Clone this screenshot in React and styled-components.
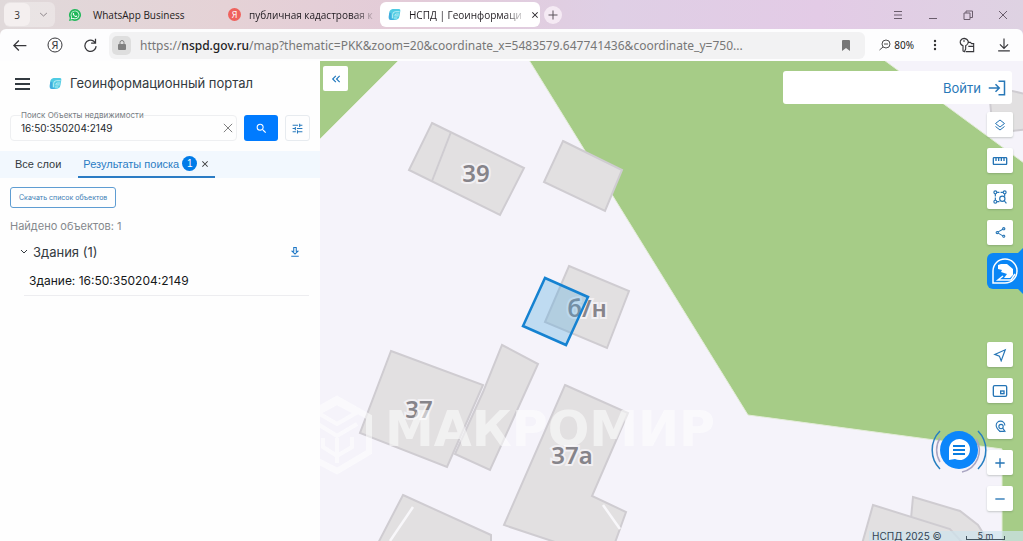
import styled, { createGlobalStyle } from "styled-components";
import {
  MdAdd,
  MdClose,
  MdKeyboardDoubleArrowLeft,
  MdOutlineShare,
  MdRemove,
  MdSearch,
  MdStraighten,
  MdTune,
} from "react-icons/md";
import { FaWhatsapp } from "react-icons/fa";

const GlobalStyle = createGlobalStyle`
  * {
    box-sizing: border-box;
  }

  body {
    margin: 0;
    font-family: Inter, "Liberation Sans", sans-serif;
    color: #333a40;
  }

  button {
    font: inherit;
    color: inherit;
    border: 0;
    padding: 0;
    background: none;
    cursor: pointer;
  }

  svg {
    display: block;
    flex: none;
  }
`;

const Window = styled.div`
  min-height: 100vh;
  display: flex;
  flex-direction: column;
  overflow: hidden;
  background: linear-gradient(90deg, #e0d9da 0, #e5d2d6 22%, #e3cbd8 40%, #dfcfe5 60%, #e3cbe6 80%, #ded2e2 100%);
`;

const TabBar = styled.header`
  height: 29px;
  display: flex;
  align-items: center;
  padding: 0 4px;
  font-family: "Open Sans", "Noto Sans", sans-serif;
  font-size: 10px;
  color: #1f1b20;
`;

const TabGroup = styled.button`
  height: 25px;
  width: 51px;
  display: flex;
  align-items: center;
  gap: 9px;
  border-radius: 6px;
  background: rgba(255, 255, 255, 0.3);
  color: #6f676c;
`;

const TabCount = styled.span`
  width: 26px;
  height: 23px;
  display: grid;
  place-items: center;
  border-radius: 6px;
  background: #f4efef;
  color: #333;
`;

const Tab = styled.div`
  width: ${(p) => p.$width}px;
  height: 25px;
  display: flex;
  align-items: center;
  gap: 8px;
  padding: 0 8px;
  margin-left: ${(p) => p.$gap || 0}px;
  border-radius: 6px;
  background: ${(p) => (p.$active ? "#fff" : "transparent")};

  button {
    margin-left: auto;
  }
`;

const TabTitle = styled.span`
  white-space: nowrap;
  padding-left: ${(p) => p.$inset || 0}px;
  mask-image: ${(p) => (p.$fade ? "linear-gradient(90deg, #000 85%, rgba(0, 0, 0, 0.2))" : "none")};
`;

const NewTab = styled.button`
  width: 18px;
  height: 18px;
  margin-left: 4px;
  display: grid;
  place-items: center;
  border-radius: 50%;
  background: #f5eaf4;
  color: #5b535b;
`;

const WindowButtons = styled.div`
  margin-left: auto;
  display: flex;
  align-items: center;
  gap: 23px;
  padding-right: 10px;
  color: #6a5d6c;

  button {
    width: 12px;
    height: 12px;
  }
`;

const AddressBar = styled.nav`
  height: 32px;
  display: flex;
  align-items: center;
  padding: 0 12px;
  border-radius: 6px 6px 0 0;
  background: #fdfdfe;
  color: #37373b;
  font-family: "Noto Sans", "Open Sans", sans-serif;
`;

const NavButtons = styled.div`
  width: 97px;
  display: flex;
  align-items: center;
  gap: 20px;
`;

const Address = styled.div`
  flex: 1;
  min-width: 0;
  height: 27px;
  display: flex;
  align-items: center;
  gap: 9px;
  padding: 0 15px 0 3px;
  border-radius: 6px;
  background: #f2f2f3;
`;

const Lock = styled.span`
  width: 19px;
  height: 19px;
  display: grid;
  place-items: center;
  border-radius: 5px;
  background: #dedede;
  color: #808080;
`;

const Url = styled.a`
  flex: 1;
  overflow: hidden;
  white-space: nowrap;
  text-decoration: none;
  color: #777;
  font-size: 12px;

  b {
    font-weight: 500;
    color: #1d1d1f;
  }
`;

const Zoom = styled.button`
  height: 24px;
  margin-left: 14px;
  display: flex;
  align-items: center;
  gap: 3px;
  font-size: 10px;
  color: #222;
`;

const BarTools = styled.div`
  display: flex;
  align-items: center;
  gap: 22px;
  margin-left: 19px;
`;

const Workspace = styled.main`
  flex: 1;
  display: flex;
`;

const Sidebar = styled.aside`
  width: 320px;
  flex: none;
  background: #fefefe;
`;

const Brand = styled.div`
  height: 44px;
  display: flex;
  align-items: center;
  gap: 19px;
  padding: 0 15px;
`;

const BrandName = styled.h1`
  margin: 0;
  display: flex;
  align-items: center;
  gap: 8px;
  font-size: 13px;
  font-weight: 400;
`;

const SearchRow = styled.form`
  height: 46px;
  display: flex;
  align-items: flex-end;
  gap: 7px;
  padding: 0 10px 10px;
`;

const Field = styled.fieldset`
  flex: 1;
  min-width: 0;
  height: 30px;
  margin: 0;
  padding: 0 3px 4px 10px;
  display: flex;
  align-items: center;
  border: 1px solid #eeeff1;
  border-radius: 4px;
`;

const FieldLabel = styled.label`
  display: block;
  font-size: 8px;
  line-height: 8px;
  color: #777d83;
`;

const Legend = styled.legend`
  padding: 0;
`;

const Input = styled.input`
  flex: 1;
  min-width: 0;
  border: 0;
  padding: 0;
  outline: 0;
  background: none;
  font: 400 10px Inter, sans-serif;
  color: #25292d;
`;

const SearchButton = styled.button`
  width: 34px;
  height: 26px;
  display: grid;
  place-items: center;
  border-radius: 3px;
  background: #007bff;
  color: #fff;
`;

const FilterButton = styled.button`
  width: 25px;
  height: 26px;
  display: grid;
  place-items: center;
  border: 1px solid #e7ebef;
  border-radius: 3px;
  color: #2779bd;
`;

const LayerTabs = styled.div`
  height: 27px;
  display: flex;
  align-items: stretch;
  gap: 12px;
  padding-left: 10px;
  background: #f2f8fe;
  font-family: "Liberation Sans", sans-serif;
  font-size: 11px;
`;

const LayerTab = styled.button`
  display: flex;
  align-items: center;
  gap: 3px;
  padding: 0 5px;
  border-bottom: 2px solid ${(p) => (p.$active ? "#2b7cc4" : "transparent")};
  color: ${(p) => (p.$active ? "#2b7cc4" : "#33383d")};

  svg {
    color: #333;
  }
`;

const Count = styled.span`
  width: 15px;
  height: 15px;
  display: grid;
  place-items: center;
  border-radius: 50%;
  background: #007be8;
  color: #fff;
  font-size: 10px;
`;

const Results = styled.section`
  padding: 9px 11px 0 10px;
`;

const DownloadList = styled.button`
  display: block;
  height: 21px;
  padding: 0 8px;
  border: 1px solid #5f9dd2;
  border-radius: 3px;
  color: #3d7db5;
  font-size: 7px;
`;

const Found = styled.p`
  margin: 10px 0 0;
  font-size: 11px;
  line-height: 16px;
  color: #85898d;
`;

const Group = styled.div`
  margin-top: 8px;
  display: flex;
  align-items: center;
  gap: 5px;
  padding: 0 9px 0 10px;
  font-size: 13px;
  line-height: 20px;

  button:last-child {
    margin-left: auto;
    color: #1c76c5;
  }
`;

const Item = styled.a`
  display: block;
  margin-left: 14px;
  padding: 10px 5px 5px;
  border-bottom: 1px solid #ededf0;
  color: #15181a;
  font-size: 12px;
  line-height: 18px;
  text-decoration: none;
`;

const MapArea = styled.section`
  position: relative;
  flex: 1;
  min-width: 0;
  display: flex;
  justify-content: space-between;
  background: #f5f3fa;
`;

const MapCanvas = styled.svg`
  position: absolute;
  inset: 0;
  width: 100%;
  height: 100%;
`;

const Collapse = styled.button`
  position: relative;
  width: 25px;
  height: 25px;
  margin: 5px 3px;
  display: grid;
  place-items: center;
  border-radius: 2px;
  background: #fff;
  color: #1f78be;
`;

const Overlay = styled.div`
  position: relative;
  width: 240px;
  display: flex;
  flex-direction: column;
  align-items: flex-end;
  padding-top: 10px;
`;

const Login = styled.div`
  width: 229px;
  height: 33px;
  margin-right: 11px;
  display: flex;
  align-items: center;
  justify-content: flex-end;
  padding-right: 6px;
  border-radius: 3px;
  background: #fff;
`;

const LoginLink = styled.a`
  display: flex;
  align-items: center;
  gap: 7px;
  color: #2878b8;
  font-size: 13px;
  text-decoration: none;
`;

const Tools = styled.div`
  display: flex;
  flex-direction: column;
  gap: 11px;
  margin: ${(p) => (p.$bottom ? "auto 10px 30px 0" : "8px 10px 8px 0")};
`;

const Tool = styled.button`
  width: 26px;
  height: 25px;
  display: grid;
  place-items: center;
  border-radius: 2px;
  background: #fff;
  color: #2574b5;
  box-shadow: 0 1px 2px rgba(60, 80, 60, 0.25);
`;

const Assistant = styled.button`
  position: relative;
  width: 36px;
  height: 36px;
  display: grid;
  place-items: center;
  border-radius: 6px 0 0 6px;
  background: #0a86f5;

  &::before,
  &::after {
    content: "";
    position: absolute;
    right: 0;
    border: 5px solid transparent;
    border-right-color: #0a86f5;
    border-left: 0;
  }

  &::before {
    top: -5px;
  }

  &::after {
    bottom: -5px;
  }
`;

const Chat = styled.button`
  position: absolute;
  right: 36px;
  bottom: 63px;
`;

const Attribution = styled.footer`
  position: absolute;
  right: 0;
  bottom: 0;
  width: 154px;
  height: 10px;
  display: flex;
  align-items: center;
  justify-content: space-between;
  padding: 0 18px 0 3px;
  background: rgba(207, 227, 236, 0.7);
  color: #334352;
  font-size: 10px;
  line-height: 10px;
  white-space: nowrap;
`;

const Scale = styled.span`
  position: relative;
  width: 39px;
  text-align: center;
  font-size: 9px;
  line-height: 10px;

  &::after {
    content: "";
    position: absolute;
    inset: 5px 0 1px;
    border: 1px solid #44545f;
    border-top: 0;
  }
`;

function Icon({ size = 16, box = 24, width = 2, children, ...rest }) {
  return (
    <svg
      width={size}
      height={size}
      viewBox={`0 0 ${box} ${box}`}
      fill="none"
      stroke="currentColor"
      strokeWidth={width}
      aria-hidden="true"
      {...rest}
    >
      {children}
    </svg>
  );
}

function PortalLogo({ size }) {
  return (
    <svg width={size} height={size} viewBox="0 0 14 14" aria-hidden="true">
      <path d="M5 1h7q1.500 0 1.300 2l-.8 5q-.6 5-6 5H3Q.5 13 .8 9.500L1.300 5Q1.700 1.500 5 1z" fill="#4fcbe3" />
      <path d="M5 11V7q0-3 3-3h4.500M7.500 9V8q0-1.500 1.500-1.500h3M8 8.500h3.500M6.500 10.800h3.500" fill="none" stroke="#dff8fb" strokeWidth="0.8" />
      <path d="M.8 9.500Q.5 13 3.500 13H7l-3.500-2V5.500L1.300 5z" fill="#3494dc" opacity="0.55" />
    </svg>
  );
}

const buildings = [
  "112,62 204,107 180,154 89,109",
  "243,80 302,109 285,150 224,121",
  "249,205 309,230 287,287 225,261",
  "71,290 163,324 127,406 40,372",
  "182,284 218,303 170,409 135,393 163,331",
  "245,324 308,352 272,435 306,451 292,490 262,490 184,464",
  "83,434 171,474 171,490 54,490",
  "593,436 640,450 658,464 674,490 588,490",
  "553,444 630,468 650,490 540,490",
  "670,40 683,28 710,34 710,68 692,70 672,60",
];

const labels = [
  { text: "39", x: 156, y: 121 },
  { text: "б/н", x: 267, y: 256 },
  { text: "37", x: 99, y: 357 },
  { text: "37а", x: 252, y: 403 },
];

function CityMap() {
  return (
    <MapCanvas viewBox="0 0 703 480" preserveAspectRatio="xMinYMin slice">
      <rect width="703" height="480" fill="#f5f3fa" />
      <g fill="#a6cc87" stroke="#e3ecd8">
        <path d="M-1-1H79L-1 79z" />
        <path d="M209-1H564L704 102V481H682V388L428 354z" />
      </g>
      <g fill="#e2e0e1" stroke="#cfccd1" strokeWidth="2">
        {buildings.map((points) => (
          <polygon key={points} points={points} />
        ))}
        <path d="M131 71L112 120" />
      </g>
      <path d="M93 446L70 480M283 444L300 468" stroke="#f8f7fa" strokeWidth="2.500" />
      <g
        fill="#86848a"
        stroke="#f2f0f3"
        strokeWidth="4"
        paintOrder="stroke"
        fontFamily="Noto Sans, sans-serif"
        fontSize="24"
        fontWeight="600"
        textAnchor="middle"
      >
        {labels.map((label) => (
          <text key={label.text} x={label.x} y={label.y}>{label.text}</text>
        ))}
      </g>
      <polygon points="225,217 268,236 246,284 203,265" fill="#4fa8df" fillOpacity="0.32" stroke="#1582d1" strokeWidth="2.500" />
      <g opacity="0.55">
        <g fill="none" stroke="#fff" strokeWidth="6">
          <path d="M-8 352L17 338L49 356V391L17 410L-8 397" />
          <path d="M-2 352L17 342L36 352L17 363zM-2 363L17 375L37 363M17 377V402M3 377V386L17 395L32 386V376" strokeWidth="4" />
        </g>
        <text x="65" y="385" fill="#fff" fontFamily="DejaVu Sans, sans-serif" fontSize="49" fontWeight="700">МАКРОМИР</text>
      </g>
    </MapCanvas>
  );
}

function BrowserChrome() {
  return (
    <>
      <TabBar>
        <TabGroup aria-label="Группа вкладок">
          <TabCount>3</TabCount>
          <Icon size={9} width={2}><path d="M3 8l9 8 9-8" /></Icon>
        </TabGroup>
        <Tab $width={160} $gap={5}>
          <svg width="14" height="14" viewBox="0 0 14 14">
            <path d="M7 1a6 6 0 1 1-3 11.200L1 13l.8-3A6 6 0 0 1 7 1z" fill="#20b75a" />
            <FaWhatsapp x="2" y="2" size={10} color="#fff" />
          </svg>
          <TabTitle $inset={3}>WhatsApp Business</TabTitle>
        </Tab>
        <Tab $width={160}>
          <svg width="13" height="13" viewBox="0 0 13 13">
            <circle cx="6.500" cy="6.500" r="6.500" fill="#ef625d" />
            <text x="6.500" y="10" textAnchor="middle" fill="#fff" fontSize="9">Я</text>
          </svg>
          <TabTitle $fade>публичная кадастровая к</TabTitle>
        </Tab>
        <Tab $width={160} $active>
          <PortalLogo size={13} />
          <TabTitle $fade>НСПД | Геоинформаци</TabTitle>
          <button aria-label="Закрыть вкладку"><MdClose size={10} /></button>
        </Tab>
        <NewTab aria-label="Новая вкладка">
          <Icon size={12} width={2}><path d="M12 3v18M3 12h18" /></Icon>
        </NewTab>
        <WindowButtons>
          <button aria-label="Меню"><Icon size={12} width={2}><path d="M4 5h16M4 12h16M4 19h16" /></Icon></button>
          <button aria-label="Свернуть"><Icon size={12} width={2}><path d="M4 19h16" /></Icon></button>
          <button aria-label="Развернуть"><Icon size={12} width={2}><path d="M4 8h12v13H4zM8 8V4h13v13h-5" /></Icon></button>
          <button aria-label="Закрыть"><Icon size={12} width={2}><path d="M4 4l16 16M20 4L4 20" /></Icon></button>
        </WindowButtons>
      </TabBar>
      <AddressBar>
        <NavButtons>
          <button aria-label="Назад"><Icon size={15}><path d="M23 12H3M11 4l-8 8 8 8" /></Icon></button>
          <button aria-label="Яндекс">
            <svg width="16" height="16" viewBox="0 0 16 16">
              <circle cx="8" cy="8" r="7" fill="none" stroke="currentColor" />
              <text x="8" y="12" textAnchor="middle" fill="currentColor" fontSize="11">Я</text>
            </svg>
          </button>
          <button aria-label="Обновить"><Icon size={15}><path d="M21 13a9 9 0 1 1-4-8l3 3M20 1v7h-7" /></Icon></button>
        </NavButtons>
        <Address>
          <Lock>
            <svg width="10" height="12" viewBox="0 0 10 12">
              <rect x="1" y="5" width="8" height="6" rx="1" fill="currentColor" />
              <path d="M3 5V3.500a2 2 0 0 1 4 0V5" fill="none" stroke="currentColor" />
            </svg>
          </Lock>
          <Url href="#map">
            https://<b>nspd.gov.ru</b>/map?thematic=PKK&amp;zoom=20&amp;coordinate_x=5483579.647741436&amp;coordinate_y=750...
          </Url>
          <svg width="8" height="11" viewBox="0 0 8 11" aria-hidden="true"><path d="M0 1q0-1 1-1h6q1 0 1 1v10L4 8l-4 3z" fill="#777" /></svg>
        </Address>
        <Zoom>
          <Icon size={12} width={1.6}><circle cx="14" cy="10" r="8" /><path d="M8 16l-7 6M10 10h8" /></Icon>
          80%
        </Zoom>
        <BarTools>
          <button aria-label="Ещё">
            <svg width="4" height="14" viewBox="0 0 4 14" fill="#333"><circle cx="2" cy="3" r="1.200" /><circle cx="2" cy="7" r="1.200" /><circle cx="2" cy="11" r="1.200" /></svg>
          </button>
          <button aria-label="Пароли">
            <Icon size={16} width={1.7}>
              <path d="M6 21V13Q1 11 2 6q2-4 6-4 5 1 6 5 0 4-4 6v5l-2 4zM6 6h3M14 8h3l2 2h3v12H10M14 14h8" />
            </Icon>
          </button>
          <button aria-label="Загрузки"><Icon size={14}><path d="M12 1v17M5 11l7 7 7-7M2 22h20" /></Icon></button>
        </BarTools>
      </AddressBar>
    </>
  );
}

function ObjectSearch() {
  return (
    <Sidebar>
      <Brand>
        <button aria-label="Меню портала"><Icon size={15} box={15}><path d="M0 3h15M0 8h15M0 13h15" /></Icon></button>
        <BrandName><PortalLogo size={13} />Геоинформационный портал</BrandName>
      </Brand>
      <SearchRow onSubmit={(e) => e.preventDefault()}>
        <Field>
          <Legend><FieldLabel htmlFor="query">Поиск Объекты недвижимости</FieldLabel></Legend>
          <Input id="query" defaultValue="16:50:350204:2149" />
          <button type="reset" aria-label="Очистить"><Icon size={10} color="#666"><path d="M2 2l20 20M22 2L2 22" /></Icon></button>
        </Field>
        <SearchButton aria-label="Найти"><MdSearch size={13} /></SearchButton>
        <FilterButton type="button" aria-label="Фильтры"><MdTune size={13} /></FilterButton>
      </SearchRow>
      <LayerTabs>
        <LayerTab>Все слои</LayerTab>
        <LayerTab $active>Результаты поиска <Count>1</Count><MdClose size={10} /></LayerTab>
      </LayerTabs>
      <Results>
        <DownloadList>Скачать список объектов</DownloadList>
        <Found>Найдено объектов: 1</Found>
        <Group>
          <button aria-label="Свернуть группу"><Icon size={8} width={3}><path d="M3 6l9 9 9-9" /></Icon></button>
          <span>Здания (1)</span>
          <button aria-label="Скачать">
            <Icon size={10} width={2.5}><path d="M9 1h6v9h4l-7 7-7-7h4zM3 22h18" /></Icon>
          </button>
        </Group>
        <Item href="#object">Здание: 16:50:350204:2149</Item>
      </Results>
    </Sidebar>
  );
}

export default function App() {
  return (
    <Window>
      <GlobalStyle />
      <BrowserChrome />
      <Workspace>
        <ObjectSearch />
        <MapArea>
          <CityMap />
          <Collapse aria-label="Скрыть панель"><MdKeyboardDoubleArrowLeft size={14} /></Collapse>
          <Overlay>
            <Login>
              <LoginLink href="#login">
                Войти
                <Icon size={18}><path d="M1 12h14M10 7l5 5-5 5M14 3h8v18h-8" /></Icon>
              </LoginLink>
            </Login>
            <Tools>
              <Tool aria-label="Слои"><Icon size={12}><path d="M12 2l9 7-9 7-9-7zM3 15l9 7 9-7" /></Icon></Tool>
              <Tool aria-label="Измерения"><MdStraighten size={16} /></Tool>
              <Tool aria-label="Поиск по области">
                <Icon size={14}>
                  <path d="M7 4h10M4 7v10M20 7v4M7 20h4" strokeDasharray="4 2" />
                  <circle cx="4" cy="4" r="2.500" /><circle cx="20" cy="4" r="2.500" /><circle cx="4" cy="20" r="2.500" />
                  <circle cx="16" cy="15" r="4.500" /><path d="M19 18l4 5" />
                </Icon>
              </Tool>
              <Tool aria-label="Поделиться"><MdOutlineShare size={13} /></Tool>
            </Tools>
            <Assistant aria-label="Помощник">
              <svg width="28" height="28" viewBox="0 0 28 28">
                <path d="M2 26V14A12 12 0 1 1 14 26z" fill="none" stroke="#fff" strokeWidth="1.500" />
                <path d="M7 8l3-1h6l6 5v6l-3 3h-6l3-4-6-2 1-2-4-1z" fill="#fff" />
                <path d="M12 19l-5 4h13l4-6" fill="none" stroke="#fff" strokeWidth="1.500" />
              </svg>
            </Assistant>
            <Tools $bottom>
              <Tool aria-label="Моё местоположение"><Icon size={14}><path d="M3 11L21 3l-7 19-3-8z" /></Icon></Tool>
              <Tool aria-label="Обзорная карта"><Icon size={16}><rect x="2" y="4" width="20" height="16" rx="2" /><rect x="13" y="12" width="5" height="4" /></Icon></Tool>
              <Tool aria-label="Поиск места">
                <Icon size={13}><path d="M12 22Q4 15 4 10a8 8 0 0 1 16 0" /><circle cx="13" cy="12" r="4" /><path d="M16 15l5 7M10 21h9" /></Icon>
              </Tool>
              <Tool aria-label="Приблизить"><MdAdd size={16} /></Tool>
              <Tool aria-label="Отдалить"><MdRemove size={16} /></Tool>
            </Tools>
            <Chat aria-label="Чат">
              <svg width="56" height="56" viewBox="0 0 56 56">
                <circle cx="28" cy="28" r="19" fill="#0b86fa" />
                <path d="M18 38V27a10.500 10.500 0 1 1 6 10z" fill="#fff" />
                <path d="M22 24h12M22 28h12M22 32h12" stroke="#0b7de0" strokeWidth="2" />
                <path d="M9 9a27 27 0 0 0 0 38M47 9a27 27 0 0 1 0 38" fill="none" stroke="#267fc1" strokeWidth="1.500" />
                <path d="M9 16a23 23 0 0 0 0 24M45 17a22 22 0 0 1-14 33" fill="none" stroke="#aaa6c2" strokeWidth="1.500" />
              </svg>
            </Chat>
            <Attribution><span>НСПД 2025 ©</span><Scale>5 m</Scale></Attribution>
          </Overlay>
        </MapArea>
      </Workspace>
    </Window>
  );
}
